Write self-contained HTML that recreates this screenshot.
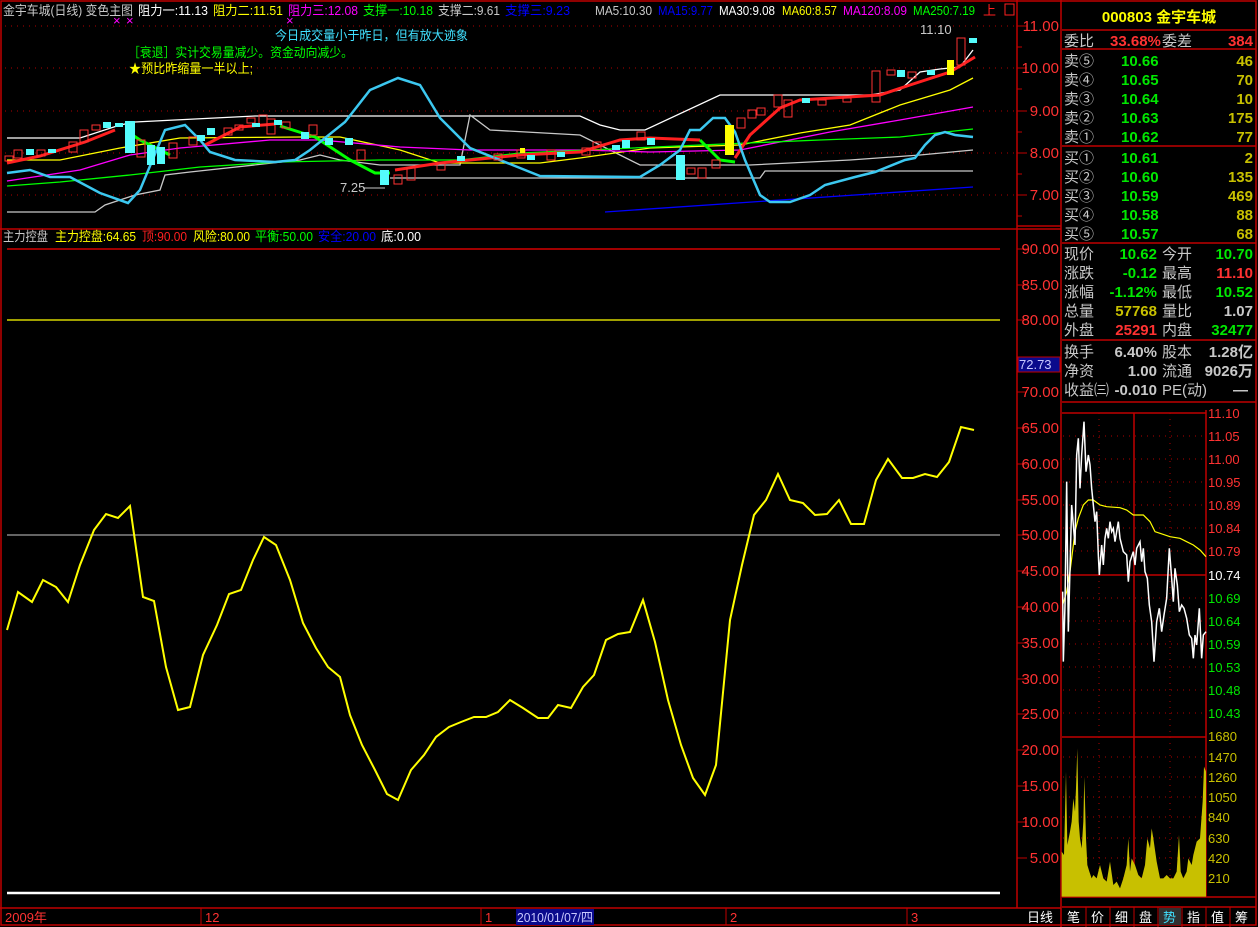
<!DOCTYPE html>
<html><head><meta charset="utf-8"><style>
html,body{margin:0;padding:0;background:#000;width:1258px;height:927px;overflow:hidden}
svg{display:block}
text{font-family:"Liberation Sans","Noto Sans CJK SC",sans-serif;font-size:13px}
.b{font-size:15px;font-weight:bold}
.r{font-size:15px}
</style></head><body>
<svg width="1258" height="927" viewBox="0 0 1258 927" xmlns="http://www.w3.org/2000/svg">
<rect width="1258" height="927" fill="#000"/>
<g stroke="#c00000" stroke-width="1.5" fill="none">
<rect x="1" y="1" width="1255" height="924"/>
<line x1="0" y1="229" x2="1061" y2="229"/>
<line x1="1017" y1="0" x2="1017" y2="908"/>
<line x1="1061" y1="0" x2="1061" y2="927"/>
<line x1="0" y1="908" x2="1061" y2="908"/>
<line x1="1062" y1="30" x2="1256" y2="30"/>
<line x1="1062" y1="49" x2="1256" y2="49"/>
<line x1="1062" y1="146" x2="1256" y2="146"/>
<line x1="1062" y1="243" x2="1256" y2="243"/>
<line x1="1062" y1="340" x2="1256" y2="340"/>
<line x1="1062" y1="402" x2="1256" y2="402"/>
<line x1="1062" y1="413" x2="1206" y2="413"/>
<line x1="1062" y1="575" x2="1206" y2="575"/>
<line x1="1062" y1="737" x2="1206" y2="737"/>
<line x1="1062" y1="897" x2="1256" y2="897"/>
<line x1="1206" y1="410" x2="1206" y2="897"/>
<line x1="1134" y1="413" x2="1134" y2="897"/>
<line x1="1062" y1="907" x2="1256" y2="907"/>
<line x1="1017" y1="226" x2="1061" y2="226"/>
</g>
<g stroke="#b00000" stroke-dasharray="1,5" stroke-width="1">
<line x1="5" y1="26" x2="1015" y2="26"/><line x1="5" y1="68" x2="1015" y2="68"/><line x1="5" y1="111" x2="1015" y2="111"/><line x1="5" y1="153" x2="1015" y2="153"/><line x1="5" y1="195" x2="1015" y2="195"/>
<line x1="1063" y1="436" x2="1205" y2="436"/><line x1="1063" y1="459" x2="1205" y2="459"/><line x1="1063" y1="482" x2="1205" y2="482"/><line x1="1063" y1="505" x2="1205" y2="505"/><line x1="1063" y1="528" x2="1205" y2="528"/><line x1="1063" y1="551" x2="1205" y2="551"/><line x1="1063" y1="598" x2="1205" y2="598"/><line x1="1063" y1="621" x2="1205" y2="621"/><line x1="1063" y1="644" x2="1205" y2="644"/><line x1="1063" y1="667" x2="1205" y2="667"/><line x1="1063" y1="690" x2="1205" y2="690"/><line x1="1063" y1="713" x2="1205" y2="713"/>
<line x1="1063" y1="757" x2="1205" y2="757"/><line x1="1063" y1="777" x2="1205" y2="777"/><line x1="1063" y1="797" x2="1205" y2="797"/><line x1="1063" y1="817" x2="1205" y2="817"/><line x1="1063" y1="838" x2="1205" y2="838"/><line x1="1063" y1="858" x2="1205" y2="858"/><line x1="1063" y1="878" x2="1205" y2="878"/>
<line x1="1099" y1="413" x2="1099" y2="897"/><line x1="1170" y1="413" x2="1170" y2="897"/>
</g>
<g stroke="#c00000" stroke-width="1">
<line x1="1017" y1="26" x2="1027" y2="26"/><line x1="1017" y1="68" x2="1027" y2="68"/><line x1="1017" y1="111" x2="1027" y2="111"/><line x1="1017" y1="153" x2="1027" y2="153"/><line x1="1017" y1="195" x2="1027" y2="195"/>
<line x1="1017" y1="47" x2="1022" y2="47"/><line x1="1017" y1="89" x2="1022" y2="89"/><line x1="1017" y1="132" x2="1022" y2="132"/><line x1="1017" y1="174" x2="1022" y2="174"/><line x1="1017" y1="216" x2="1022" y2="216"/>
</g>
<g fill="#ff3232" text-anchor="end">
<text x="1059" y="31" class="r">11.00</text><text x="1059" y="73" class="r">10.00</text><text x="1059" y="116" class="r">9.00</text><text x="1059" y="158" class="r">8.00</text><text x="1059" y="200" class="r">7.00</text>
</g>
<g font-size="13">
<text x="3" y="15" fill="#c8c8c8" textLength="130" lengthAdjust="spacingAndGlyphs">金宇车城(日线) 变色主图</text>
<text x="138" y="15" fill="#fff" textLength="70" lengthAdjust="spacingAndGlyphs">阻力一:11.13</text>
<text x="213" y="15" fill="#ffff00" textLength="70" lengthAdjust="spacingAndGlyphs">阻力二:11.51</text>
<text x="288" y="15" fill="#ff00ff" textLength="70" lengthAdjust="spacingAndGlyphs">阻力三:12.08</text>
<text x="363" y="15" fill="#00ff00" textLength="70" lengthAdjust="spacingAndGlyphs">支撑一:10.18</text>
<text x="438" y="15" fill="#c8c8c8" textLength="62" lengthAdjust="spacingAndGlyphs">支撑二:9.61</text>
<text x="505" y="15" fill="#0000ff" textLength="65" lengthAdjust="spacingAndGlyphs">支撑三:9.23</text>
<text x="595" y="15" fill="#c8c8c8" textLength="57" lengthAdjust="spacingAndGlyphs">MA5:10.30</text>
<text x="658" y="15" fill="#0000ff" textLength="55" lengthAdjust="spacingAndGlyphs">MA15:9.77</text>
<text x="719" y="15" fill="#fff" textLength="56" lengthAdjust="spacingAndGlyphs">MA30:9.08</text>
<text x="782" y="15" fill="#ffff00" textLength="55" lengthAdjust="spacingAndGlyphs">MA60:8.57</text>
<text x="843" y="15" fill="#ff00ff" textLength="64" lengthAdjust="spacingAndGlyphs">MA120:8.09</text>
<text x="913" y="15" fill="#00ff00" textLength="62" lengthAdjust="spacingAndGlyphs">MA250:7.19</text>
</g>
<text x="983" y="15" fill="#ff2020">上</text>
<rect x="1005" y="4" width="9" height="11" fill="none" stroke="#ff2020"/>
<text x="113" y="25" fill="#ff00ff" font-size="9">×</text>
<text x="126" y="25" fill="#ff00ff" font-size="9">×</text>
<text x="286" y="25" fill="#ff00ff" font-size="9">×</text>
<text x="275" y="40" fill="#40e0ff" textLength="193" lengthAdjust="spacingAndGlyphs">今日成交量小于昨日，但有放大迹象</text>
<text x="128" y="57" fill="#00ff00" textLength="225" lengthAdjust="spacingAndGlyphs">［衰退］实计交易量减少。资金动向减少。</text>
<text x="129" y="73" fill="#ffff00" textLength="124" lengthAdjust="spacingAndGlyphs">★预比昨缩量一半以上;</text>
<text x="920" y="34" fill="#c8c8c8">11.10</text>
<text x="340" y="192" fill="#c8c8c8">7.25</text>
<line x1="363" y1="188" x2="385" y2="188" stroke="#c8c8c8"/>
<g fill="none" stroke-width="1.3">
<polyline stroke="#fff" points="7,138 80,138 120,125 135,122 255,116 580,116 600,125 620,130 645,130 720,95 870,95 900,90 920,72 940,69 960,67 973,50"/>
<polyline stroke="#c8c8c8" points="7,212 95,212 105,205 135,195 160,190 165,175 190,172 300,160 320,155 340,160 380,165 460,165 470,115 490,130 580,135 640,165 750,165 850,160 920,155 973,150"/>
<polyline stroke="#c8c8c8" points="390,178 760,178 765,171 973,171"/>
<polyline stroke="#ffff00" points="7,160 60,160 120,148 180,138 300,137 340,137 400,150 440,163 540,163 580,158 650,148 740,145 800,133 850,125 900,105 950,90 973,78"/>
<polyline stroke="#ff00ff" points="7,181 80,170 130,155 180,148 270,140 320,140 400,147 470,150 580,150 650,152 740,150 830,132 900,120 973,107"/>
<polyline stroke="#00ff00" points="7,186 60,182 130,175 200,167 280,162 380,160 460,160 520,153 700,145 820,140 900,137 973,129"/>
<polyline stroke="#0000ff" points="605,212 973,187"/>
<polyline stroke="#ff2020" stroke-width="3" points="7,163 40,156 85,142 115,130"/>
<polyline stroke="#00ff00" stroke-width="3" points="128,132 140,140 170,155"/>
<polyline stroke="#ff2020" stroke-width="3" points="205,145 240,127 275,124"/>
<polyline stroke="#00ff00" stroke-width="3" points="280,126 315,137 350,160 375,173 390,173"/>
<polyline stroke="#ff2020" stroke-width="3" points="395,170 440,163 520,155 580,152 620,140 650,138 700,140"/>
<polyline stroke="#00ff00" stroke-width="3" points="700,140 720,160 735,162"/>
<polyline stroke="#ff2020" stroke-width="3" points="735,158 750,135 780,108 800,100 880,95 910,85 950,72 975,57"/>
<polyline stroke="#3cc8f0" stroke-width="2.5" points="7,173 30,170 50,177 70,177 100,193 128,203 140,190 165,130 185,125 200,140 210,152 235,160 275,162 295,160 310,150 345,122 370,90 398,78 420,85 440,118 470,148 520,168 540,176 640,177 660,165 680,150 690,130 700,130 713,118 725,118 735,132 745,160 760,195 770,202 790,202 810,195 825,185 855,177 875,172 905,160 915,158 925,145 935,135 945,132 955,135 973,137"/>
</g>
<g stroke-width="1">
<g fill="none" stroke="#ff3232">
<rect x="5" y="156" width="8" height="5"/><rect x="14" y="150" width="8" height="8"/><rect x="37" y="150" width="8" height="6"/><rect x="69" y="142" width="8" height="10"/><rect x="80" y="130" width="8" height="12"/><rect x="92" y="125" width="8" height="5"/><rect x="137" y="140" width="8" height="17"/><rect x="169" y="143" width="8" height="15"/><rect x="189" y="137" width="8" height="8"/><rect x="224" y="128" width="8" height="7"/><rect x="235" y="125" width="8" height="5"/><rect x="247" y="118" width="8" height="5"/><rect x="259" y="115" width="8" height="10"/><rect x="267" y="119" width="8" height="15"/><rect x="282" y="122" width="8" height="6"/><rect x="309" y="125" width="8" height="10"/><rect x="357" y="150" width="8" height="10"/><rect x="394" y="175" width="8" height="9"/><rect x="407" y="168" width="8" height="12"/><rect x="437" y="163" width="8" height="7"/><rect x="494" y="154" width="8" height="6"/><rect x="517" y="150" width="8" height="8"/><rect x="547" y="150" width="8" height="10"/><rect x="582" y="148" width="8" height="7"/><rect x="593" y="142" width="8" height="8"/><rect x="637" y="132" width="8" height="8"/><rect x="687" y="168" width="8" height="6"/><rect x="698" y="168" width="8" height="10"/><rect x="712" y="160" width="8" height="8"/><rect x="737" y="118" width="8" height="10"/><rect x="748" y="110" width="8" height="8"/><rect x="757" y="108" width="8" height="7"/><rect x="774" y="95" width="8" height="12"/><rect x="784" y="100" width="8" height="17"/><rect x="818" y="100" width="8" height="5"/><rect x="843" y="98" width="8" height="4"/><rect x="872" y="71" width="8" height="31"/><rect x="887" y="70" width="8" height="5"/><rect x="908" y="72" width="8" height="6"/><rect x="957" y="38" width="8" height="27"/>
</g>
<g fill="#54fcfc">
<rect x="26" y="149" width="8" height="6"/><rect x="48" y="149" width="8" height="4"/><rect x="103" y="122" width="8" height="6"/><rect x="115" y="123" width="8" height="4"/><rect x="125" y="121" width="10" height="32"/><rect x="147" y="145" width="8" height="20"/><rect x="157" y="147" width="8" height="17"/><rect x="197" y="135" width="8" height="6"/><rect x="207" y="128" width="8" height="7"/><rect x="252" y="123" width="8" height="4"/><rect x="274" y="120" width="8" height="5"/><rect x="301" y="132" width="8" height="7"/><rect x="325" y="138" width="8" height="7"/><rect x="345" y="138" width="8" height="7"/><rect x="380" y="170" width="9" height="15"/><rect x="457" y="156" width="8" height="5"/><rect x="527" y="155" width="8" height="5"/><rect x="557" y="152" width="8" height="5"/><rect x="612" y="145" width="8" height="5"/><rect x="622" y="140" width="8" height="8"/><rect x="647" y="138" width="8" height="7"/><rect x="676" y="155" width="9" height="25"/><rect x="802" y="98" width="8" height="5"/><rect x="897" y="70" width="8" height="7"/><rect x="927" y="70" width="8" height="5"/><rect x="969" y="38" width="8" height="5"/>
</g>
<g fill="#ffff00"><rect x="725" y="125" width="9" height="30"/><rect x="947" y="60" width="7" height="15"/><rect x="520" y="148" width="5" height="5"/></g>
</g>
<g font-size="13">
<text x="3" y="241" fill="#c8c8c8" textLength="45" lengthAdjust="spacingAndGlyphs">主力控盘</text>
<text x="55" y="241" fill="#ffff00" textLength="81" lengthAdjust="spacingAndGlyphs">主力控盘:64.65</text>
<text x="142" y="241" fill="#ff2020" textLength="45" lengthAdjust="spacingAndGlyphs">顶:90.00</text>
<text x="193" y="241" fill="#ffff00" textLength="57" lengthAdjust="spacingAndGlyphs">风险:80.00</text>
<text x="255" y="241" fill="#00ff00" textLength="58" lengthAdjust="spacingAndGlyphs">平衡:50.00</text>
<text x="318" y="241" fill="#0000ff" textLength="58" lengthAdjust="spacingAndGlyphs">安全:20.00</text>
<text x="381" y="241" fill="#fff" textLength="40" lengthAdjust="spacingAndGlyphs">底:0.00</text>
</g>
<line x1="7" y1="249" x2="1000" y2="249" stroke="#ff0000" stroke-width="1.2"/>
<line x1="7" y1="320" x2="1000" y2="320" stroke="#ffff00" stroke-width="1.2"/>
<line x1="7" y1="535" x2="1000" y2="535" stroke="#c8c8c8" stroke-width="1"/>
<line x1="7" y1="893" x2="1000" y2="893" stroke="#fff" stroke-width="2.5"/>
<polyline fill="none" stroke="#ffff00" stroke-width="2" points="7,630 18,592 32,602 43,580 56,587 68,602 80,565 94,530 106,514 118,518 130,506 143,597 154,601 166,667 178,710 190,707 203,655 217,625 229,594 241,590 253,560 264,537 276,545 290,580 303,623 316,648 328,667 340,677 350,715 362,745 375,770 387,794 398,800 411,770 424,755 436,737 449,727 461,722 474,717 486,717 498,712 510,700 523,708 538,718 548,718 558,705 571,708 583,687 594,675 606,640 618,634 630,632 643,600 655,642 668,700 681,745 693,778 705,795 716,765 730,620 742,565 754,515 766,500 778,474 790,500 803,503 815,515 827,514 839,500 851,524 864,524 876,480 888,459 902,478 913,478 925,474 937,477 949,462 961,427 974,430"/>
<g stroke="#c00000">
<line x1="1017" y1="249" x2="1027" y2="249"/><line x1="1017" y1="285" x2="1027" y2="285"/><line x1="1017" y1="320" x2="1027" y2="320"/><line x1="1017" y1="392" x2="1027" y2="392"/><line x1="1017" y1="428" x2="1027" y2="428"/><line x1="1017" y1="464" x2="1027" y2="464"/><line x1="1017" y1="500" x2="1027" y2="500"/><line x1="1017" y1="535" x2="1027" y2="535"/><line x1="1017" y1="571" x2="1027" y2="571"/><line x1="1017" y1="607" x2="1027" y2="607"/><line x1="1017" y1="643" x2="1027" y2="643"/><line x1="1017" y1="679" x2="1027" y2="679"/><line x1="1017" y1="714" x2="1027" y2="714"/><line x1="1017" y1="750" x2="1027" y2="750"/><line x1="1017" y1="786" x2="1027" y2="786"/><line x1="1017" y1="822" x2="1027" y2="822"/><line x1="1017" y1="858" x2="1027" y2="858"/>
</g>
<g fill="#ff3232" text-anchor="end">
<text x="1059" y="254" class="r">90.00</text><text x="1059" y="290" class="r">85.00</text><text x="1059" y="325" class="r">80.00</text><text x="1059" y="397" class="r">70.00</text><text x="1059" y="433" class="r">65.00</text><text x="1059" y="469" class="r">60.00</text><text x="1059" y="505" class="r">55.00</text><text x="1059" y="540" class="r">50.00</text><text x="1059" y="576" class="r">45.00</text><text x="1059" y="612" class="r">40.00</text><text x="1059" y="648" class="r">35.00</text><text x="1059" y="684" class="r">30.00</text><text x="1059" y="719" class="r">25.00</text><text x="1059" y="755" class="r">20.00</text><text x="1059" y="791" class="r">15.00</text><text x="1059" y="827" class="r">10.00</text><text x="1059" y="863" class="r">5.00</text>
</g>
<rect x="1018" y="357" width="42" height="15" fill="#0a0a8c" stroke="#c00000"/>
<text x="1019" y="369" fill="#c8c8ff">72.73</text>
<rect x="516" y="909" width="78" height="16" fill="#0a0a8c"/>
<g fill="#ff3232"><text x="5" y="922">2009年</text><text x="205" y="922">12</text><text x="485" y="922">1</text><text x="730" y="922">2</text><text x="911" y="922">3</text></g>
<text x="517" y="922" fill="#c8c8ff" textLength="76" lengthAdjust="spacingAndGlyphs">2010/01/07/四</text>
<g stroke="#c00000"><line x1="201" y1="908" x2="201" y2="925"/><line x1="481" y1="908" x2="481" y2="925"/><line x1="726" y1="908" x2="726" y2="925"/><line x1="907" y1="908" x2="907" y2="925"/></g>
<text x="1027" y="922" fill="#fff">日线</text>
<text x="1159" y="22" text-anchor="middle" fill="#ffff00" class="b" font-size="16">000803 金宇车城</text>
<text x="1064" y="46" fill="#c8c8c8" class="r">委比</text><text x="1110" y="46" fill="#ff3232" class="b">33.68%</text><text x="1162" y="46" fill="#c8c8c8" class="r">委差</text><text x="1253" y="46" fill="#ff3232" class="b" text-anchor="end">384</text>
<g fill="#c8c8c8">
<text x="1064" y="66" class="r">卖⑤</text><text x="1064" y="85" class="r">卖④</text><text x="1064" y="104" class="r">卖③</text><text x="1064" y="123" class="r">卖②</text><text x="1064" y="142" class="r">卖①</text>
<text x="1064" y="163" class="r">买①</text><text x="1064" y="182" class="r">买②</text><text x="1064" y="201" class="r">买③</text><text x="1064" y="220" class="r">买④</text><text x="1064" y="239" class="r">买⑤</text>
</g>
<g fill="#00e800">
<text x="1121" y="66" class="b">10.66</text><text x="1121" y="85" class="b">10.65</text><text x="1121" y="104" class="b">10.64</text><text x="1121" y="123" class="b">10.63</text><text x="1121" y="142" class="b">10.62</text>
<text x="1121" y="163" class="b">10.61</text><text x="1121" y="182" class="b">10.60</text><text x="1121" y="201" class="b">10.59</text><text x="1121" y="220" class="b">10.58</text><text x="1121" y="239" class="b">10.57</text>
</g>
<g fill="#c8c000" text-anchor="end">
<text x="1253" y="66" class="b">46</text><text x="1253" y="85" class="b">70</text><text x="1253" y="104" class="b">10</text><text x="1253" y="123" class="b">175</text><text x="1253" y="142" class="b">77</text>
<text x="1253" y="163" class="b">2</text><text x="1253" y="182" class="b">135</text><text x="1253" y="201" class="b">469</text><text x="1253" y="220" class="b">88</text><text x="1253" y="239" class="b">68</text>
</g>
<g fill="#c8c8c8">
<text x="1064" y="259" class="r">现价</text><text x="1064" y="278" class="r">涨跌</text><text x="1064" y="297" class="r">涨幅</text><text x="1064" y="316" class="r">总量</text><text x="1064" y="335" class="r">外盘</text>
<text x="1162" y="259" class="r">今开</text><text x="1162" y="278" class="r">最高</text><text x="1162" y="297" class="r">最低</text><text x="1162" y="316" class="r">量比</text><text x="1162" y="335" class="r">内盘</text>
<text x="1064" y="357" class="r">换手</text><text x="1064" y="376" class="r">净资</text><text x="1064" y="395" class="r">收益㈢</text>
<text x="1162" y="357" class="r">股本</text><text x="1162" y="376" class="r">流通</text><text x="1162" y="395" class="r">PE(动)</text>
</g>
<g text-anchor="end">
<text x="1157" y="259" fill="#00e800" class="b">10.62</text><text x="1157" y="278" fill="#00e800" class="b">-0.12</text><text x="1157" y="297" fill="#00e800" class="b">-1.12%</text><text x="1157" y="316" fill="#c8c000" class="b">57768</text><text x="1157" y="335" fill="#ff3232" class="b">25291</text>
<text x="1253" y="259" fill="#00e800" class="b">10.70</text><text x="1253" y="278" fill="#ff3232" class="b">11.10</text><text x="1253" y="297" fill="#00e800" class="b">10.52</text><text x="1253" y="316" fill="#c8c8c8" class="b">1.07</text><text x="1253" y="335" fill="#00e800" class="b">32477</text>
<text x="1157" y="357" fill="#c8c8c8" class="b">6.40%</text><text x="1157" y="376" fill="#c8c8c8" class="b">1.00</text><text x="1157" y="395" fill="#c8c8c8" class="b">-0.010</text>
<text x="1253" y="357" fill="#c8c8c8" class="b">1.28亿</text><text x="1253" y="376" fill="#c8c8c8" class="b">9026万</text><text x="1248" y="395" fill="#c8c8c8" class="b">—</text>
</g>
<g transform="translate(1060,405) scale(0.33333)">
<polygon fill="#c8c000" points="5,1475 5,1340 12,1350 18,1100 22,1320 30,1280 35,1250 40,1180 45,1220 48,1150 52,1030 56,1250 60,1300 65,1330 70,1250 73,1115 78,1300 82,1380 88,1400 95,1420 100,1410 110,1420 120,1380 130,1420 140,1430 150,1370 160,1440 170,1430 180,1450 190,1420 200,1380 205,1300 210,1400 215,1360 225,1380 235,1410 245,1420 255,1380 262,1300 270,1330 275,1270 280,1300 290,1370 300,1420 310,1420 320,1410 330,1420 340,1420 350,1400 357,1290 362,1400 370,1420 380,1400 385,1360 395,1380 400,1350 410,1310 420,1300 428,1190 432,1085 438,1100 438,1475"/>
<polyline fill="none" stroke="#ffff00" stroke-width="1.2" vector-effect="non-scaling-stroke" points="8,600 20,560 30,500 45,380 55,340 70,300 85,285 100,285 120,300 140,305 180,308 200,315 220,330 250,330 270,350 285,380 300,385 330,395 360,400 380,410 400,420 420,435 438,455"/>
<polyline fill="none" stroke="#fff" stroke-width="1.5" vector-effect="non-scaling-stroke" points="8,560 10,770 15,600 20,230 25,680 35,300 45,420 50,150 55,100 60,250 65,150 72,50 78,200 85,150 90,180 95,250 105,350 110,320 115,450 118,510 125,420 130,480 135,400 140,370 145,400 150,350 155,380 160,370 165,410 170,380 175,350 180,400 190,440 200,450 205,530 210,470 220,440 225,480 230,430 240,410 245,470 250,430 255,500 262,520 268,600 275,650 282,770 290,650 298,610 305,680 312,630 320,580 328,430 335,520 340,590 345,490 352,540 358,620 365,600 372,610 380,640 388,690 395,700 400,760 405,690 410,720 418,610 425,760 430,690 438,680"/>
</g>
<g font-size="13">
<g fill="#ff3232"><text x="1208" y="418">11.10</text><text x="1208" y="441">11.05</text><text x="1208" y="464">11.00</text><text x="1208" y="487">10.95</text><text x="1208" y="510">10.89</text><text x="1208" y="533">10.84</text><text x="1208" y="556">10.79</text></g>
<text x="1208" y="580" fill="#fff">10.74</text>
<g fill="#00e800"><text x="1208" y="603">10.69</text><text x="1208" y="626">10.64</text><text x="1208" y="649">10.59</text><text x="1208" y="672">10.53</text><text x="1208" y="695">10.48</text><text x="1208" y="718">10.43</text></g>
<g fill="#c8c000"><text x="1208" y="741">1680</text><text x="1208" y="762">1470</text><text x="1208" y="782">1260</text><text x="1208" y="802">1050</text><text x="1208" y="822">840</text><text x="1208" y="843">630</text><text x="1208" y="863">420</text><text x="1208" y="883">210</text></g>
</g>
<g stroke="#c00000"><line x1="1086" y1="907" x2="1086" y2="927"/><line x1="1110" y1="907" x2="1110" y2="927"/><line x1="1134" y1="907" x2="1134" y2="927"/><line x1="1158" y1="907" x2="1158" y2="927"/><line x1="1182" y1="907" x2="1182" y2="927"/><line x1="1206" y1="907" x2="1206" y2="927"/><line x1="1230" y1="907" x2="1230" y2="927"/></g>
<rect x="1159" y="908" width="22" height="17" fill="#303030"/>
<g fill="#fff" font-size="13"><text x="1067" y="922">笔</text><text x="1091" y="922">价</text><text x="1115" y="922">细</text><text x="1139" y="922">盘</text><text x="1163" y="922" fill="#40e0ff">势</text><text x="1187" y="922">指</text><text x="1211" y="922">值</text><text x="1235" y="922">筹</text></g>
</svg>
</body></html>
